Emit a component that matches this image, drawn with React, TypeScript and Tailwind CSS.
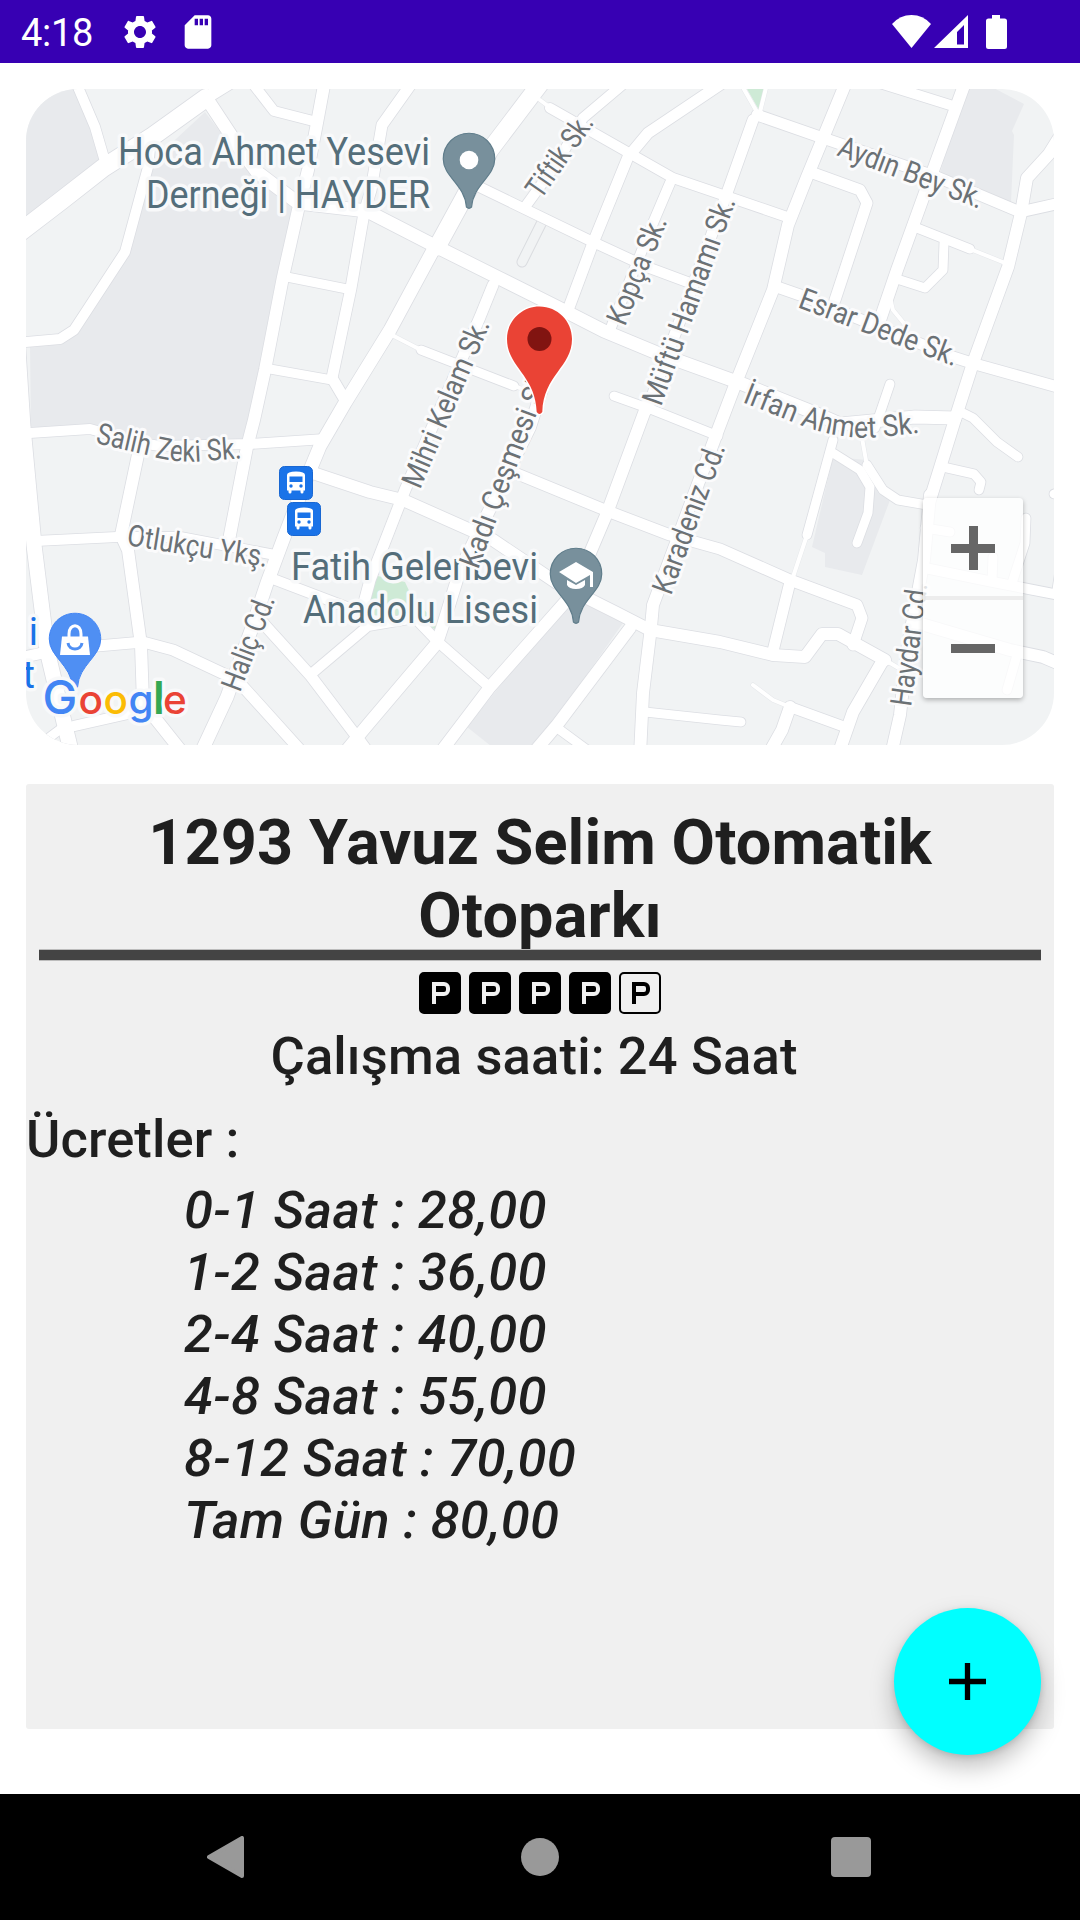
import React from "react";
import { MdSettings, MdSdCard } from "react-icons/md";

type Road = [points: string, width: number];

const areas: string[] = [
  "20,80 74,80 96,128 102,160 20,222",
  "205,112 247,167 293,207 250,420 245,445 150,442 90,427 31,429 30,345 60,340 74,330 127,250 148,165",
  "967,80 990,86 1024,104 1012,131 1014,135 1011,202 940,173",
  "833,457 867,460 890,500 862,575 825,567 825,553 812,547",
  "565,605 583,603 623,623 557,717 530,750 496,750 467,727",
];

const roads: Road[] = [
  ["10,240 62,200 103,168 153,136 206,98", 18],
  ["206,98 235,80", 12],
  ["75,80 95,127 104,158", 10],
  ["151,140 148,167 125,252 74,330 60,339 15,343", 10],
  ["209,102 240,149 257,172 298,203 367,211 437,247 497,277 557,307 604,331 657,353 740,383 810,411 840,424 915,417 955,418", 13],
  ["325,80 317,123 308,170 298,210 283,277 265,370 254,420 247,447 229,540", 12],
  ["250,80 274,111 317,122", 10],
  ["414,80 382,125 371,190 364,213 351,288 332,378 345,400", 11],
  ["287,277 347,289", 9],
  ["270,369 332,380", 9],
  ["543,80 490,150 437,247", 17],
  ["437,243 390,330 345,403 320,446 308,475 283,540 267,583 253,625 227,697 200,755", 13],
  ["550,108 673,178 720,194 790,218", 10],
  ["628,80 583,118 557,163 525,207", 10],
  ["727,80 648,133 628,157 593,243 568,310", 11],
  ["465,180 593,242 647,267 690,283", 10],
  ["670,183 653,223 610,330", 10],
  ["493,285 480,317 405,490 400,503 370,580 362,610", 11],
  ["273,579 365,614", 10],
  ["310,675 368,626 415,618 437,641 487,685", 10],
  ["262,622 310,675 357,737 368,752", 11],
  ["545,380 530,427 460,570 443,625 437,643 370,722 345,752", 12],
  ["421,350 514,386", 9],
  ["15,434 90,429 140,443 160,446 250,444 325,439", 10],
  ["313,473 370,492 403,500 493,540 557,583 617,613 650,630 720,642 773,655 805,657 822,634 838,634 885,660", 12],
  ["18,350 23,427 34,545 47,650 64,722 72,755", 15],
  ["139,450 121,535 128,550 141,645 143,703 182,752", 12],
  ["35,541 117,537 180,537 275,555", 10],
  ["10,660 47,652 97,646 143,642 173,650 237,680 302,752", 11],
  ["74,726 145,710", 10],
  ["30,752 62,728", 9],
  ["647,405 607,513 587,560 567,600 490,687 440,753", 12],
  ["614,396 653,410 718,436", 9],
  ["515,473 610,512 670,535 720,549 790,580 857,605 862,618 853,645", 11],
  ["753,120 727,193 647,410", 11],
  ["847,80 807,177 788,225 773,290 737,380 718,430 653,605 651,627 643,693 640,755", 12],
  ["757,115 823,138 937,177 1020,212 1065,202", 11],
  ["870,80 950,105", 10],
  ["966,80 927,187 897,270 880,320", 12],
  ["813,173 860,190 867,203 835,300", 11],
  ["917,228 970,249", 9],
  ["944,243 943,270 925,288 897,279", 9],
  ["1062,133 1049,154 1027,178 1021,213 1008,267 973,363 957,413 930,500", 12],
  ["930,495 924,560 907,650 900,715 891,755", 12],
  ["777,287 800,295 953,357 975,364 1065,389", 11],
  ["890,384 875,428", 9],
  ["833,440 807,535", 9],
  ["790,582 772,655", 11],
  ["833,453 860,470 870,487 868,513 857,543", 9],
  ["867,465 883,490 898,500 927,505", 9],
  ["955,415 963,413 973,418 997,442 1018,457", 9],
  ["943,467 974,474 981,482 979,490", 9],
  ["1054,494 1070,490", 9],
  ["925,528 950,532", 9],
  ["925,568 993,582 1064,596", 10],
  ["1026,518 1025,543 1012,583", 9],
  ["993,557 992,580", 9],
  ["918,623 1010,650 1043,657 1064,666", 12],
  ["1017,655 1007,690", 9],
  ["1060,560 1055,593", 6],
  ["882,662 853,712 838,755", 12],
  ["790,707 845,727", 10],
  ["790,707 782,730 768,755", 12],
  ["645,712 720,720 741,722", 9],
  ["630,628 557,725 530,757", 12],
  ["560,730 590,752", 9],
];

const lanes: string[] = [
  "540,100 552,109",
  "390,334 421,350",
  "512,385 535,394",
  "741,84 757,112",
  "767,84 760,112",
  "970,249 1005,263",
  "890,298 893,310 907,327",
  "807,535 792,580",
  "862,438 867,466",
  "885,660 902,670",
  "753,685 773,700 790,707",
];

const streets: { id: string; d: string; len: number; name: string }[] = [
  { id: "aydin", d: "M836 155L993 214", len: 153, name: "Aydın Bey Sk." },
  { id: "esrar", d: "M797 307L974 374", len: 168, name: "Esrar Dede Sk." },
  { id: "irfan", d: "M742 402L795 423Q840 441 880 437L938 431", len: 184, name: "İrfan Ahmet Sk." },
  { id: "tiftik", d: "M541 200L600 115", len: 94, name: "Tiftik Sk." },
  { id: "kopca", d: "M625 327L672 210", len: 114, name: "Kopça Sk." },
  { id: "muftu", d: "M661 407L741 187", len: 219, name: "Müftü Hamamı Sk." },
  { id: "mihri", d: "M420 490L497 308", len: 180, name: "Mihri Kelam Sk." },
  { id: "kadi", d: "M478 570L563 344", len: 212, name: "Kadı Çeşmesi Sk." },
  { id: "karadeniz", d: "M671 596L732 430", len: 158, name: "Karadeniz Cd." },
  { id: "haydar", d: "M911 707L930 565", len: 124, name: "Haydar Cd." },
  { id: "halic", d: "M240 693L282 582", len: 100, name: "Haliç Cd." },
  { id: "salih", d: "M95 443L143 454Q175 464 205 461L258 457", len: 149, name: "Salih Zeki Sk." },
  { id: "otlukcu", d: "M126 545L200 557L287 570", len: 142, name: "Otlukçu Ykş." },
];

const prices = [
  "0-1 Saat : 28,00",
  "1-2 Saat : 36,00",
  "2-4 Saat : 40,00",
  "4-8 Saat : 55,00",
  "8-12 Saat : 70,00",
  "Tam Gün : 80,00",
];

const PIN = "M0-26C-14.5-26-26-14.5-26 0C-26 18-4 26-2.6 48.5Q0 51 2.6 48.5C4 26 26 18 26 0C26-14.5 14.5-26 0-26Z";

function Bus({ x, y }: { x: number; y: number }) {
  return (
    <g transform={`translate(${x} ${y})`}>
      <rect x="0.5" y="0.5" width="33" height="33" rx="5" fill="#1a73e8" stroke="#1967d2" />
      <path fill="#fff" d="M8 9Q8 5.500 17 5.500Q26 5.500 26 9V24.500H24.500V26Q24.500 27.500 23 27.500T21.500 26V24.500H12.500V26Q12.500 27.500 11 27.500T9.500 26V24.500H8Z" />
      <rect x="10.500" y="10.500" width="13" height="5.500" fill="#1a73e8" />
      <circle cx="12" cy="20" r="1.700" fill="#1a73e8" />
      <circle cx="22" cy="20" r="1.700" fill="#1a73e8" />
    </g>
  );
}

function StreetMap() {
  return (
    <svg className="block h-full w-full" viewBox="26 89 1028 656" fontFamily="Roboto, sans-serif">
      <rect x="26" y="89" width="1028" height="656" fill="#f1f3f4" />
      {areas.map((p) => <polygon key={p} points={p} fill="#e8eaed" />)}
      <path d="M747 89H764L759 110Z M373 575L405 582L412 597L432 618L439 625L436 630L415 617L368 615Z" fill="#ceead6" />
      <path d="M542 222L522 262" stroke="#dadce0" strokeWidth="11" strokeLinecap="round" />
      <path d="M542 222L522 262" stroke="#f1f3f4" strokeWidth="9" strokeLinecap="round" />
      <g fill="none" strokeLinecap="round" strokeLinejoin="round">
        {roads.map(([p, w]) => <polyline key={p} points={p} stroke="#dcdee3" strokeWidth={w + 1.6} />)}
        {lanes.map((p) => <polyline key={p} points={p} stroke="#e6e8eb" strokeWidth="5" />)}
        {roads.map(([p, w]) => <polyline key={p} points={p} stroke="#fff" strokeWidth={w} />)}
        {lanes.map((p) => <polyline key={p} points={p} stroke="#fff" strokeWidth="4" />)}
      </g>

      <g fontSize="38" fill="#546e7a" stroke="#f8f9fa" strokeWidth="7" strokeLinejoin="round" paintOrder="stroke">
        <text x="118" y="165" textLength="312" lengthAdjust="spacingAndGlyphs">Hoca Ahmet Yesevi</text>
        <text x="146" y="208" textLength="284" lengthAdjust="spacingAndGlyphs">Derneği | HAYDER</text>
        <text x="291" y="580" textLength="247" lengthAdjust="spacingAndGlyphs">Fatih Gelenbevi</text>
        <text x="303" y="623" textLength="235" lengthAdjust="spacingAndGlyphs">Anadolu Lisesi</text>
      </g>
      <g fontSize="38" fill="#1a73e8" stroke="#f8f9fa" strokeWidth="7" strokeLinejoin="round" paintOrder="stroke" textAnchor="end">
        <text x="38" y="645">i</text>
        <text x="35" y="688">t</text>
      </g>

      <g fontSize="30" fill="#6b7175" stroke="#fbfbfc" strokeWidth="6" strokeLinejoin="round" paintOrder="stroke">
        {streets.map((s) => (
          <React.Fragment key={s.id}>
            <path id={s.id} d={s.d} fill="none" stroke="none" />
            <text textLength={s.len} lengthAdjust="spacingAndGlyphs">
              <textPath href={`#${s.id}`} textLength={s.len} lengthAdjust="spacingAndGlyphs">{s.name}</textPath>
            </text>
          </React.Fragment>
        ))}
      </g>

      <Bus x={279} y={466} />
      <Bus x={287} y={502} />

      <g transform="translate(469 159)">
        <path d={PIN} fill="#78909c" stroke="#607d8b" strokeWidth="1.200" transform="scale(.99)" />
        <circle r="9.300" cy="1" fill="#fff" />
      </g>
      <g transform="translate(576 574)">
        <path d={PIN} fill="#78909c" stroke="#607d8b" strokeWidth="1.200" transform="scale(.99)" />
        <path d="M-17-2L0-12L17-2V13H14V1L0 9Z" fill="#fff" />
        <path d="M-9 6L0 11L9 6V11Q7 15 0 15T-9 11Z" fill="#fff" />
      </g>
      <g transform="translate(75 639)">
        <path d={PIN} fill="#4f8ff3" stroke="#4285f4" strokeWidth="1" transform="scale(.99)" />
        <path d="M-13-2.500H13L15 16H-15Z" fill="#fff" />
        <path d="M-6-2V-5C-6-16 6-16 6-5V-2" fill="none" stroke="#fff" strokeWidth="3" />
        <path d="M-7 4C-6 12 6 12 7 4" fill="none" stroke="#4f8ff3" strokeWidth="3" />
      </g>

      <g transform="translate(539.500 339)">
        <path
          d="M0-32.500C-18-32.500-32.500-18-32.500 0C-32.500 28-4 36-2.800 73Q0 77 2.800 73C4 36 32.500 28 32.500 0C32.500-18 18-32.500 0-32.500Z"
          fill="#ea4335" stroke="#fff" strokeWidth="3" paintOrder="stroke"
        />
        <circle r="12" fill="#811411" />
      </g>

      <g fontFamily="Inter, sans-serif" stroke="#f8f9fa" strokeWidth="7" strokeLinejoin="round" paintOrder="stroke">
        <text y="713.500" x="42.500" fontSize="46.500" fontWeight="500" fill="#4285f4">G</text>
        <text y="713.500" x="78.500" fontSize="40.500" fontWeight="500" fill="#ea4335">o</text>
        <text y="713.500" x="103.500" fontSize="40.500" fontWeight="500" fill="#fbbc04">o</text>
        <text y="713.500" x="128.500" fontSize="40.500" fontWeight="500" fill="#4285f4">g</text>
        <text y="713.500" x="153" fontSize="45" fontWeight="600" fill="#34a853">l</text>
        <text y="713.500" x="163" fontSize="40.500" fontWeight="500" fill="#ea4335">e</text>
      </g>
      <g fill="none" strokeWidth="0" />
    </svg>
  );
}

function ZoomControls() {
  return (
    <div className="absolute right-[31px] bottom-[47px] flex h-[200px] w-[100px] flex-col rounded-[4px] bg-white/80 shadow-[0_2px_5px_rgba(0,0,0,0.28)]">
      <button className="relative grid h-[102px] place-items-center border-b-4 border-[#e8e9e9]/80">
        <span className="absolute top-[46px] h-[9px] w-[44px] bg-[#666]" />
        <span className="absolute top-[28px] h-[44px] w-[9px] bg-[#666]" />
      </button>
      <button className="flex flex-1 justify-center pt-[44px]">
        <span className="h-[9px] w-[44px] bg-[#666]" />
      </button>
    </div>
  );
}

function ParkingMark({ filled }: { filled: boolean }) {
  return (
    <div className={filled ? "h-[42px] w-[42px] rounded-[5px] border-2 border-black bg-black text-[#f0f0f0]" : "h-[42px] w-[42px] rounded-[5px] border-2 border-black text-black"}>
      <div className="mt-2 ml-[11px] h-[22px] w-[18px]">
        <div className="h-[14px] w-[18px] rounded-r-[6px] border-4 border-current" />
        <div className="h-2 w-1 bg-current" />
      </div>
    </div>
  );
}

export default function App() {
  return (
    <div className="flex h-[1920px] w-[1080px] flex-col overflow-hidden bg-white font-[Roboto,sans-serif] text-[#1f1f1f]">
      <header className="flex h-[63px] shrink-0 items-center bg-[#3700b3] text-white">
        <span className="ml-[21px] w-[99px] pt-[3px] text-[38px] leading-[63px] tracking-[-0.3px]">4:18</span>
        <MdSettings className="h-10 w-10" />
        <MdSdCard className="ml-[18px] h-10 w-10" />
        <svg className="ml-auto mr-[72px] h-[36px] w-[116px]" viewBox="892 13 116 36" fill="#fff">
          <path d="M911.500 47L892 23Q900 14 911.500 14T931 23Z" />
          <path fillRule="evenodd" d="M968 14V47H934ZM964 24L957 31V43.500H964Z" />
          <path d="M992 14H1000V17.500H1004.500Q1007 17.500 1007 20V45.500Q1007 48 1004.500 48H988.500Q986 48 986 45.500V20Q986 17.500 988.500 17.500H992Z" />
        </svg>
      </header>

      <section className="relative mx-[26px] mt-[26px] h-[656px] shrink-0 overflow-hidden rounded-[52px]">
        <StreetMap />
        <ZoomControls />
      </section>

      <main className="relative mx-[26px] mt-[39px] flex h-[945px] shrink-0 flex-col rounded-[3px] bg-[#f0f0f0] pt-[22px]">
        <h1 className="mx-[13px] text-center text-[63px] leading-[73px] font-bold tracking-[0.1px]">
          1293 Yavuz Selim Otomatik<br />Otoparkı
        </h1>
        <div className="mx-[13px] -mt-[3px] h-[12px] shrink-0 border-y border-[#bdbdbd] bg-[#444]" />
        <div className="mt-[11px] flex justify-center gap-2">
          {[true, true, true, true, false].map((filled, i) => <ParkingMark key={i} filled={filled} />)}
        </div>
        <p className="mt-[11px] pr-[12px] text-center text-[52.5px] leading-[62px] font-medium tracking-[0.15px]">Çalışma saati: 24 Saat</p>
        <p className="mt-[21px] text-[52.5px] leading-[62px] font-medium tracking-[0.1px]">Ücretler :</p>
        <ul className="mt-[9px] pl-[158px] text-[52.5px] leading-[62px] font-medium tracking-[0.33px] italic">
          {prices.map((p) => <li key={p}>{p}</li>)}
        </ul>
        <button className="absolute right-[13px] -bottom-[26px] grid h-[147px] w-[147px] place-items-center rounded-full bg-[#00ffff] shadow-[0_12px_24px_rgba(0,0,0,0.25),0_2px_6px_rgba(0,0,0,0.12)]">
          <svg className="h-[37px] w-[37px]" viewBox="0 0 37 37"><path d="M18.500 0V37M0 18.500H37" stroke="#000" strokeWidth="5.300" /></svg>
        </button>
      </main>

      <nav className="mt-auto flex h-[126px] shrink-0 items-center bg-black text-[#999]">
        <svg className="ml-[207px] h-[42px] w-[37px]" viewBox="0 0 37 42"><path d="M35 2V40L2 21Z" fill="currentColor" stroke="currentColor" strokeWidth="4" strokeLinejoin="round" /></svg>
        <div className="ml-[277px] h-[38px] w-[38px] rounded-full bg-[#999]" />
        <div className="ml-[272px] h-10 w-10 rounded-[4px] bg-[#999]" />
      </nav>
    </div>
  );
}
